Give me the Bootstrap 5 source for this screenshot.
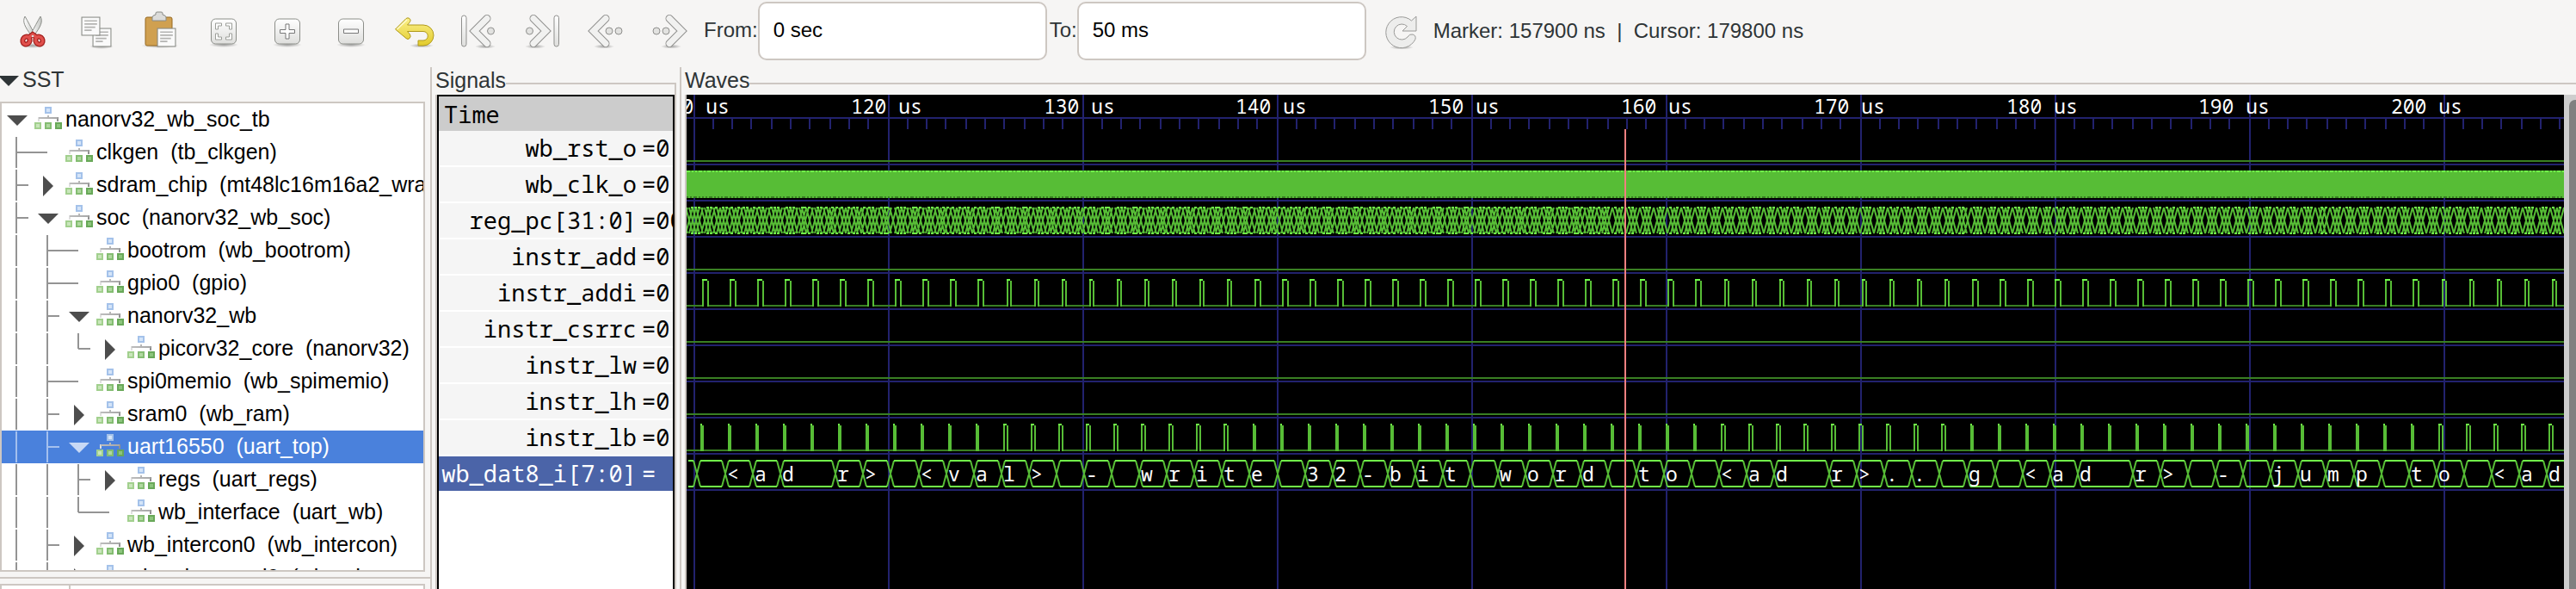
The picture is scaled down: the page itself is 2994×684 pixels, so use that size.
<!DOCTYPE html>
<html lang="en">
<head>
<meta charset="utf-8">
<meta name="viewport" content="width=device-width, initial-scale=1">
<title>Waveform viewer</title>
<link href="https://cdn.jsdelivr.net/npm/bootstrap@5.3.0/dist/css/bootstrap.min.css" rel="stylesheet">
<style>
  :root { --line: #cdc7c2; --ink: #2e3436; --pane: #f6f5f4; }
  body { background: var(--pane); color: var(--ink); font: 25px/28px "Liberation Sans", Arial, sans-serif; }
  .toolbar { height: 78px; padding: 2px 1px 8px; font-size: 24px; }
  .toolbar label { margin-left: 3px; padding-bottom: 2px; }
  .tool { width: 74px; height: 68px; border: 0; background: none; padding: 0; }
  .tool svg { width: 48px; height: 48px; }
  .time-box { width: 336px; height: 68px; padding: 0 16px 2px; border: 2px solid var(--line); border-radius: 10px; color: #000; }
  .sst { width: 502px; border-right: 2px solid var(--line); }
  .sst-head { height: 40px; gap: 4px; border: 0; background: none; padding: 0 0 8px; color: var(--ink); }
  .sst-head span { padding-bottom: 4px; }
  .tree-box { height: 546px; width: 494px; border: 2px solid var(--line); background: #fff; color: #000; }
  .tree-row { height: 38px; white-space: pre; }
  .tree-row span { padding-bottom: 2px; }
  .tree-row svg { display: block; height: 38px; flex: none; }
  .tree-row.active { background: #4a81dc; color: #fff; }
  .guide { stroke: #949494; stroke-width: 2; fill: none; }
  .arrow { fill: #4d4d4d; }
  .active .guide { stroke: #a4c0ee; }
  .active .arrow { fill: #c8d9f5; }
  .lower { margin-top: 6px; border-top: 2px solid var(--line); padding-top: 6px; }
  .search-box { width: 494px; border: 2px solid var(--line); border-bottom: 0; background: #fff; }
  .search-kind { width: 80px; border-right: 2px solid var(--line); }
  .signals { width: 290px; padding: 0 4px; border-right: 2px solid var(--line); }
  .waves { padding-left: 4px; min-width: 0; }
  .frame-head { height: 32px; padding-top: 1px; }
  .frame-rule { margin-top: 17px; border-top: 2px solid var(--line); }
  .signals .frame-rule { border-right: 2px solid var(--line); }
  .frame-body { border-left: 2px solid var(--line); }
  .signals .frame-body { border-right: 2px solid var(--line); }
  .signal-list { border: 2px solid #000; border-bottom: 0; background: #fff; color: #000; }
  .signal-list, .wave-text { font-family: "Noto Sans Mono", "DejaVu Sans Mono", monospace; }
  .signal-list { font-size: 27px; line-height: 40px; }
  .signal-time { height: 40px; line-height: 42px; background: #ccc; padding-left: 6px; }
  .signal-row { height: 40px; margin-bottom: 2px; background: #f5f5f5; white-space: pre; }
  .signal-row.active { background: #4b64a8; color: #fff; }
  .signal-name { padding-right: 6px; }
  .signal-value { width: 36px; flex: none; overflow: hidden; }
  .canvas-box { background: #000; min-width: 0; }
  .canvas-box svg { display: block; }
  .scroll-track { width: 14px; background: #cdcdcd; padding: 6px 0 0 6px; overflow: hidden; }
  .scroll-thumb { width: 14px; background: #808080; border-radius: 7px 7px 0 0; }
  .wave-text { fill: #fff; font-size: 23px; white-space: pre; }
  .w { fill: none; stroke-width: 2; shape-rendering: crispEdges; }
  .w-grid { stroke: #22226e; }
  .w-low { stroke: #397f23; }
  .w-edge { stroke: #57bd36; }
  .w-high { stroke: #71fb4a; }
  .w-mark { stroke: #f08080; }
  .w-x { fill: none; stroke: #57bd36; stroke-width: 2; }
</style>
</head>
<body class="vh-100 d-flex flex-column overflow-hidden">

<svg width="0" height="0" class="position-absolute" aria-hidden="true">
  <defs>
    <linearGradient id="metal" x1="0" y1="0" x2="0" y2="1"><stop offset="0" stop-color="#fff"/><stop offset="1" stop-color="#dededc"/></linearGradient>
    <linearGradient id="blade" x1="0" y1="0" x2="1" y2="0"><stop offset="0" stop-color="#fff"/><stop offset="1" stop-color="#c4c6c2"/></linearGradient>
    <linearGradient id="gold" x1="0" y1="0" x2="0" y2="1"><stop offset="0" stop-color="#fbf08a"/><stop offset="1" stop-color="#e2cb2c"/></linearGradient>
    <radialGradient id="shade"><stop offset="0" stop-color="#000" stop-opacity=".35"/><stop offset="1" stop-color="#000" stop-opacity="0"/></radialGradient>
    <linearGradient id="bar" x1="0" y1="0" x2="1" y2="0"><stop offset="0" stop-color="#e0e0e0"/><stop offset="1" stop-color="#909090"/></linearGradient>
    <symbol id="sheet" viewBox="0 0 22 22">
      <rect x="1" y="1" width="20" height="20" fill="#fafafa" stroke="#888a85"/>
      <path d="M4 5h14M4 8.500h14M4 12h12M4 15.500h8" stroke="#b4b4b2" stroke-width="1.600"/>
    </symbol>
    <symbol id="node" viewBox="0 0 32 28">
      <path d="M5 17v-4h22v4M16 10v3" fill="none" stroke="url(#bar)" stroke-width="2"/>
      <path d="M5 13h22" stroke="#b0b0b0" stroke-width="1.500"/>
      <rect x="13" y="1" width="6" height="6" fill="#d4e4f8" stroke="#a4c2ea" stroke-width="2"/>
      <rect x="1" y="19" width="6" height="6" fill="#c9e6bb" stroke="#a2d08e" stroke-width="2"/>
      <rect x="13" y="19" width="6" height="6" fill="#b0d8a0" stroke="#84bd72" stroke-width="2"/>
      <rect x="25" y="19" width="6" height="6" fill="#8cc47c" stroke="#68a858" stroke-width="2"/>
    </symbol>
    <symbol id="chev" viewBox="0 0 30 40">
      <path d="M23 5.500L8.500 20L23 34.500" fill="none" stroke="#8f8f8d" stroke-width="9" stroke-linecap="round" stroke-linejoin="miter"/>
      <path d="M23 5.500L8.500 20L23 34.500" fill="none" stroke="#f1f1f0" stroke-width="7" stroke-linecap="round" stroke-linejoin="miter"/>
    </symbol>
  </defs>
</svg>

<header class="toolbar d-flex align-items-center">
  <button class="tool" aria-label="Cut"><svg viewBox="0 0 48 48">
    <ellipse cx="24" cy="41" rx="15" ry="3" fill="url(#shade)"/>
    <path d="M15 7C12 13 14 18 23 30l3-3C22 20 18 12 15 7z" fill="url(#blade)" stroke="#8c8e89"/>
    <path d="M33 7c3 6 1 11-8 23l-3-3C26 20 30 12 33 7z" fill="url(#blade)" stroke="#8c8e89"/>
    <g fill="none" stroke="#a31f1c" stroke-width="6"><ellipse cx="16.500" cy="35" rx="4" ry="4.500" transform="rotate(30 16.500 35)"/><ellipse cx="31.500" cy="35" rx="4" ry="4.500" transform="rotate(-30 31.500 35)"/><path d="M20 31l4-3 4 3"/></g>
    <g fill="none" stroke="#e0504c" stroke-width="3.500"><ellipse cx="16.500" cy="35" rx="4" ry="4.500" transform="rotate(30 16.500 35)"/><ellipse cx="31.500" cy="35" rx="4" ry="4.500" transform="rotate(-30 31.500 35)"/><path d="M20 31l4-3 4 3"/></g>
    <circle cx="24" cy="30" r="1.300" fill="#ddd"/></svg></button>
  <button class="tool" aria-label="Copy"><svg viewBox="0 0 48 48">
    <ellipse cx="30" cy="42" rx="14" ry="3" fill="url(#shade)"/>
    <use href="#sheet" x="19" y="20" width="23" height="23"/><use href="#sheet" x="6" y="7" width="23" height="23"/></svg></button>
  <button class="tool" aria-label="Paste"><svg viewBox="0 0 48 48">
    <ellipse cx="24" cy="41" rx="22" ry="3" fill="url(#shade)"/>
    <rect x="7" y="8" width="31" height="33" rx="2" fill="#d0a050" stroke="#966820"/>
    <path d="M15 12v-4q0-2 4-3V3q0-1 2-1h4q2 0 2 1v2q4 1 4 3v4z" fill="#dcdcda" stroke="#888a85"/>
    <use href="#sheet" x="20" y="20" width="23" height="23"/></svg></button>
  <button class="tool" aria-label="Zoom fit"><svg viewBox="0 0 48 48">
    <ellipse cx="24" cy="40" rx="17" ry="3" fill="url(#shade)"/>
    <rect x="9.500" y="10" width="29" height="29" rx="5" fill="url(#metal)" stroke="#8c8e89"/>
    <g fill="#fff" stroke="#9c9e99"><path d="M14.500 22v-7h7v3h-4v4zM26.500 15h7v7h-3v-4h-4zM14.500 27h3v4h4v3h-7zM30.500 27h3v7h-7v-3h4z"/></g></svg></button>
  <button class="tool" aria-label="Zoom in"><svg viewBox="0 0 48 48">
    <ellipse cx="24" cy="40" rx="17" ry="3" fill="url(#shade)"/>
    <rect x="9.500" y="10" width="29" height="29" rx="5" fill="url(#metal)" stroke="#8c8e89"/>
    <path d="M22 16h4v6.500h6.500v4H26V33h-4v-6.500h-6.500v-4H22z" fill="#fff" stroke="#777"/></svg></button>
  <button class="tool" aria-label="Zoom out"><svg viewBox="0 0 48 48">
    <ellipse cx="24" cy="40" rx="17" ry="3" fill="url(#shade)"/>
    <rect x="9.500" y="10" width="29" height="29" rx="5" fill="url(#metal)" stroke="#8c8e89"/>
    <path d="M15.500 22h17v4.500h-17z" fill="#fff" stroke="#777"/></svg></button>
  <button class="tool" aria-label="Undo"><svg viewBox="0 0 48 48">
    <ellipse cx="32" cy="41" rx="14" ry="2.500" fill="url(#shade)"/>
    <path d="M1.500 22L14 9.500q2-1.500 4 0t.5 4L15.500 17H34a12 12 0 0 1 0 24h-6v-6h6a5 5 0 0 0 0-10.500H15.500l3 3.500q1.500 2.500-.5 4.500t-4 0z" fill="url(#gold)" stroke="#b09a1c"/>
    <path d="M3.500 22L15 11" stroke="#fffbd0" stroke-width="1.500"/></svg></button>
  <button class="tool" aria-label="First edge"><svg viewBox="0 0 48 48">
    <ellipse cx="32" cy="42" rx="12" ry="2.500" fill="url(#shade)"/>
    <rect x="4.500" y="6" width="5.500" height="36" rx="2.700" fill="url(#metal)" stroke="#8f8f8d"/><use href="#chev" x="11" y="4" width="30" height="40"/>
    <circle cx="38.500" cy="24" r="4" fill="#e2e2e0" stroke="#8f8f8d"/></svg></button>
  <button class="tool" aria-label="Last edge"><svg viewBox="0 0 48 48">
    <ellipse cx="16" cy="42" rx="12" ry="2.500" fill="url(#shade)"/>
    <g transform="matrix(-1 0 0 1 48 0)"><rect x="4.500" y="6" width="5.500" height="36" rx="2.700" fill="url(#metal)" stroke="#8f8f8d"/><use href="#chev" x="11" y="4" width="30" height="40"/>
    <circle cx="38.500" cy="24" r="4" fill="#e2e2e0" stroke="#8f8f8d"/></g></svg></button>
  <button class="tool" aria-label="Previous edge"><svg viewBox="0 0 48 48">
    <ellipse cx="22" cy="42" rx="12" ry="2.500" fill="url(#shade)"/>
    <use href="#chev" x="1" y="4" width="30" height="40"/>
    <circle cx="28" cy="24" r="4" fill="#e2e2e0" stroke="#8f8f8d"/><circle cx="39" cy="24" r="4" fill="#e2e2e0" stroke="#8f8f8d"/></svg></button>
  <button class="tool" aria-label="Next edge"><svg viewBox="0 0 48 48">
    <ellipse cx="26" cy="42" rx="12" ry="2.500" fill="url(#shade)"/>
    <g transform="matrix(-1 0 0 1 48 0)"><use href="#chev" x="1" y="4" width="30" height="40"/>
    <circle cx="28" cy="24" r="4" fill="#e2e2e0" stroke="#8f8f8d"/><circle cx="39" cy="24" r="4" fill="#e2e2e0" stroke="#8f8f8d"/></g></svg></button>
  <label for="from">From:</label>
  <input id="from" class="time-box" value="0 sec">
  <label for="to">To:</label>
  <input id="to" class="time-box" value="50 ms">
  <button class="tool ms-1" aria-label="Reload"><svg viewBox="0 0 48 48">
    <ellipse cx="24" cy="43" rx="14" ry="2.500" fill="url(#shade)"/>
    <path d="M41 7v17H25l5.500-5.500A9 9 0 1 0 31 31q2-4 6-3t3 5.500A18 18 0 1 1 35.500 12z" fill="#ededec" stroke="#9a9a98"/></svg></button>
  <span class="text-nowrap">Marker: 157900 ns&nbsp; |&nbsp; Cursor: 179800 ns</span>
</header>

<main class="d-flex flex-grow-1 overflow-hidden">
  <section class="sst flex-shrink-0">
    <button class="sst-head d-flex align-items-center">
      <svg width="22" height="12"><path d="M-2 0h24L10 12z" fill="#2e3436"/></svg><span>SST</span>
    </button>
    <div class="tree-box overflow-hidden" id="tree"></div>
    <div class="lower"><div class="search-box d-flex"><div class="search-kind">&nbsp;</div></div></div>
  </section>

  <section class="signals flex-shrink-0 d-flex flex-column">
    <div class="frame-head d-flex"><span>Signals</span><div class="frame-rule flex-grow-1"></div></div>
    <div class="frame-body flex-grow-1">
      <div class="signal-list h-100" id="signals"><div class="signal-time">Time</div></div>
    </div>
  </section>

  <section class="waves flex-grow-1 d-flex flex-column">
    <div class="frame-head d-flex"><span>Waves</span><div class="frame-rule flex-grow-1"></div></div>
    <div class="frame-body flex-grow-1 d-flex">
      <div class="canvas-box flex-grow-1 overflow-hidden"><svg id="wave" width="100%" height="100%" role="img" aria-label="Waveforms"></svg></div>
      <div class="scroll-track"><div class="scroll-thumb h-100"></div></div>
    </div>
  </section>
</main>

<script src="https://cdn.jsdelivr.net/npm/bootstrap@5.3.0/dist/js/bootstrap.bundle.min.js"></script>
<script>
// Hierarchy rows: depth, state (open / shut / leaf), text, guide flags per level (| pass, + branch, L last)
const rows = [
  [0, 'open', 'nanorv32_wb_soc_tb', ''],
  [1, 'leaf', 'clkgen  (tb_clkgen)', '+'],
  [1, 'shut', 'sdram_chip  (mt48lc16m16a2_wrapper)', '+'],
  [1, 'open', 'soc  (nanorv32_wb_soc)', '+'],
  [2, 'leaf', 'bootrom  (wb_bootrom)', '|+'],
  [2, 'leaf', 'gpio0  (gpio)', '|+'],
  [2, 'open', 'nanorv32_wb', '|+'],
  [3, 'shut', 'picorv32_core  (nanorv32)', '||L'],
  [2, 'leaf', 'spi0memio  (wb_spimemio)', '|+'],
  [2, 'shut', 'sram0  (wb_ram)', '|+'],
  [2, 'open', 'uart16550  (uart_top)', '|+'],
  [3, 'shut', 'regs  (uart_regs)', '||+'],
  [3, 'leaf', 'wb_interface  (uart_wb)', '||L'],
  [2, 'shut', 'wb_intercon0  (wb_intercon)', '|+'],
  [2, 'shut', 'wb_sdram_ctrl0  (wb_sdram_ctrl)', '|+']
];
document.getElementById('tree').innerHTML = rows.map(([d, state, text, g]) => {
  let s = '';
  [...g].forEach((c, i) => {
    const x = 17 + 36 * i;
    s += `<path class="guide" d="M${x} 1V${c === 'L' ? 19 : 37}"/>`;
    if (c !== '|') s += `<path class="guide" d="M${x} 19H${x + (state === 'leaf' ? 36 : 14)}"/>`;
  });
  const a = 18 + 36 * d;
  if (state === 'open') s += `<path class="arrow" d="M${a - 12} 14h24l-12 12z"/>`;
  if (state === 'shut') s += `<path class="arrow" d="M${a - 6} 8v24l12-12z"/>`;
  s += `<use href="#node" x="${a + 20}" y="4" width="32" height="28"/>`;
  const on = text.startsWith('uart16550') ? ' active' : '';
  return `<div class="tree-row d-flex align-items-center${on}"><svg width="${a + 56}">${s}</svg><span>${text}</span></div>`;
}).join('');

const signals = [['wb_rst_o', '=0'], ['wb_clk_o', '=0'], ['reg_pc[31:0]', '=00000000'], ['instr_add', '=0'], ['instr_addi', '=0'],
  ['instr_csrrc', '=0'], ['instr_lw', '=0'], ['instr_lh', '=0'], ['instr_lb', '=0'], ['wb_dat8_i[7:0]', '=']];
document.getElementById('signals').innerHTML += signals.map(([n, v]) =>
  `<div class="signal-row d-flex${v === '=' ? ' active' : ''}"><span class="signal-name flex-grow-1 text-end">${n}</span><span class="signal-value">${v}</span></div>`).join('');

// Waveforms
const out = [];
const path = (cls, d) => out.push(`<path class="${cls}" d="${d}"/>`);
const low = i => 77 + 42 * i, high = i => 47 + 42 * i, end = 4000;
let grid = `M0 27H${end}`;
for (let k = 0; k < 18; k++) {
  const x = 9 + 226 * k;
  grid += `M${x} 0V2000`;
  for (let m = 1; m < 10; m++) grid += `M${x + 2 * Math.floor(m * 11.3)} 27V40`;
}
for (let i = 0; i < 10; i++) grid += `M0 ${81 + 42 * i}H${end}`;
path('w w-grid', grid);
for (let k = 0; k < 10; k++) out.push(`<text class="wave-text" x="${Math.round(-33 + 223.8 * k)}" y="22">${110 + 10 * k} us</text>`);

[0, 3, 5, 6, 7].forEach(i => path('w w-low', `M0 ${low(i)}H${end}`));

// clock, too dense to show single edges
out.push(`<rect x="0" y="88" width="${end}" height="32" fill="#57bd36"/>`);
out.push(`<path class="w w-high" stroke-dasharray="4 2 2 2 2 2 4 2 2 2" d="M0 89H${end}"/>`);
out.push(`<path class="w w-low" stroke-dasharray="2 2 2 2 4 2 2 2" d="M0 119H${end}"/>`);

// pulse trains
function pulses(i, s0, sj, e0, ej) {
  let l = '', v = '', h = '', prev = 0;
  for (let k = 0; k < 120; k++) {
    const s = s0 + 32 * k + 2 * Math.floor((k + sj) / 26), e = e0 + 32 * k + 2 * Math.floor((k + ej) / 26);
    l += `M${prev} ${low(i)}H${s}`;
    v += `M${s + 1} ${high(i) - 1}V${low(i) + 1}M${e - 1} ${high(i) + 1}V${low(i) + 1}`;
    h += `M${s} ${high(i)}H${Math.max(e - 2, s + 2)}`;
    prev = e;
  }
  path('w w-low', l); path('w w-edge', v); path('w w-high', h);
}
pulses(4, 18, 15, 26, 6);
pulses(8, 16, 6, 20, 15);

// buses
function bus(i, xs, x0) {
  const t = high(i), b = low(i);
  let lines = '', cross = '', prev = x0;
  xs.forEach(x => {
    if (x - 4 > prev) lines += `M${prev} ${t}H${x - 4}M${prev} ${b}H${x - 4}`;
    cross += `M${x - 4} ${t}L${x + 4} ${b}M${x - 4} ${b}L${x + 4} ${t}`;
    prev = x + 4;
  });
  path('w-x', cross); path('w w-high', lines);
}
const pc = [];
for (let k = -1; k < 120; k++) {
  const x = 12 + 32.077 * k;
  const step = x < 100 ? [3, 9, 13, 17, 23, 27, 31]
    : x < 1070 ? [3, 9, 13, 17, 23, 27, 30]
    : [1, 9, 13, 17, 25, 29];
  step.forEach(o => pc.push(Math.round(x + o)));
}
bus(2, pc, 0);
path('w w-high', pc.map((x, n) => n % 4 ? `M${x - 2} ${high(2)}h3M${x - 2} ${low(2)}h3` : '').join(''));

// "_" keeps the previous byte for one more cycle
const bytes = '<ad_r> <val> - write 32-bit word to <ad_r>.. g <ad_r> - jump to <ad_r>';
const xs = [12];
[...bytes].forEach((c, j) => { if (c !== '_') xs.push(Math.round(45 + 32.077 * j)); });
bus(9, xs, 2);
[...bytes].slice(0, 67).forEach((c, j) => {
  if (c !== '_' && c !== ' ') out.push(`<text class="wave-text" x="${Math.round(47 + 32.077 * j)}" y="449">${c.replace('<', '&lt;').replace('>', '&gt;')}</text>`);
});

path('w w-mark', 'M1091 40V2000');
document.getElementById('wave').innerHTML = out.join('');
</script>
</body>
</html>
